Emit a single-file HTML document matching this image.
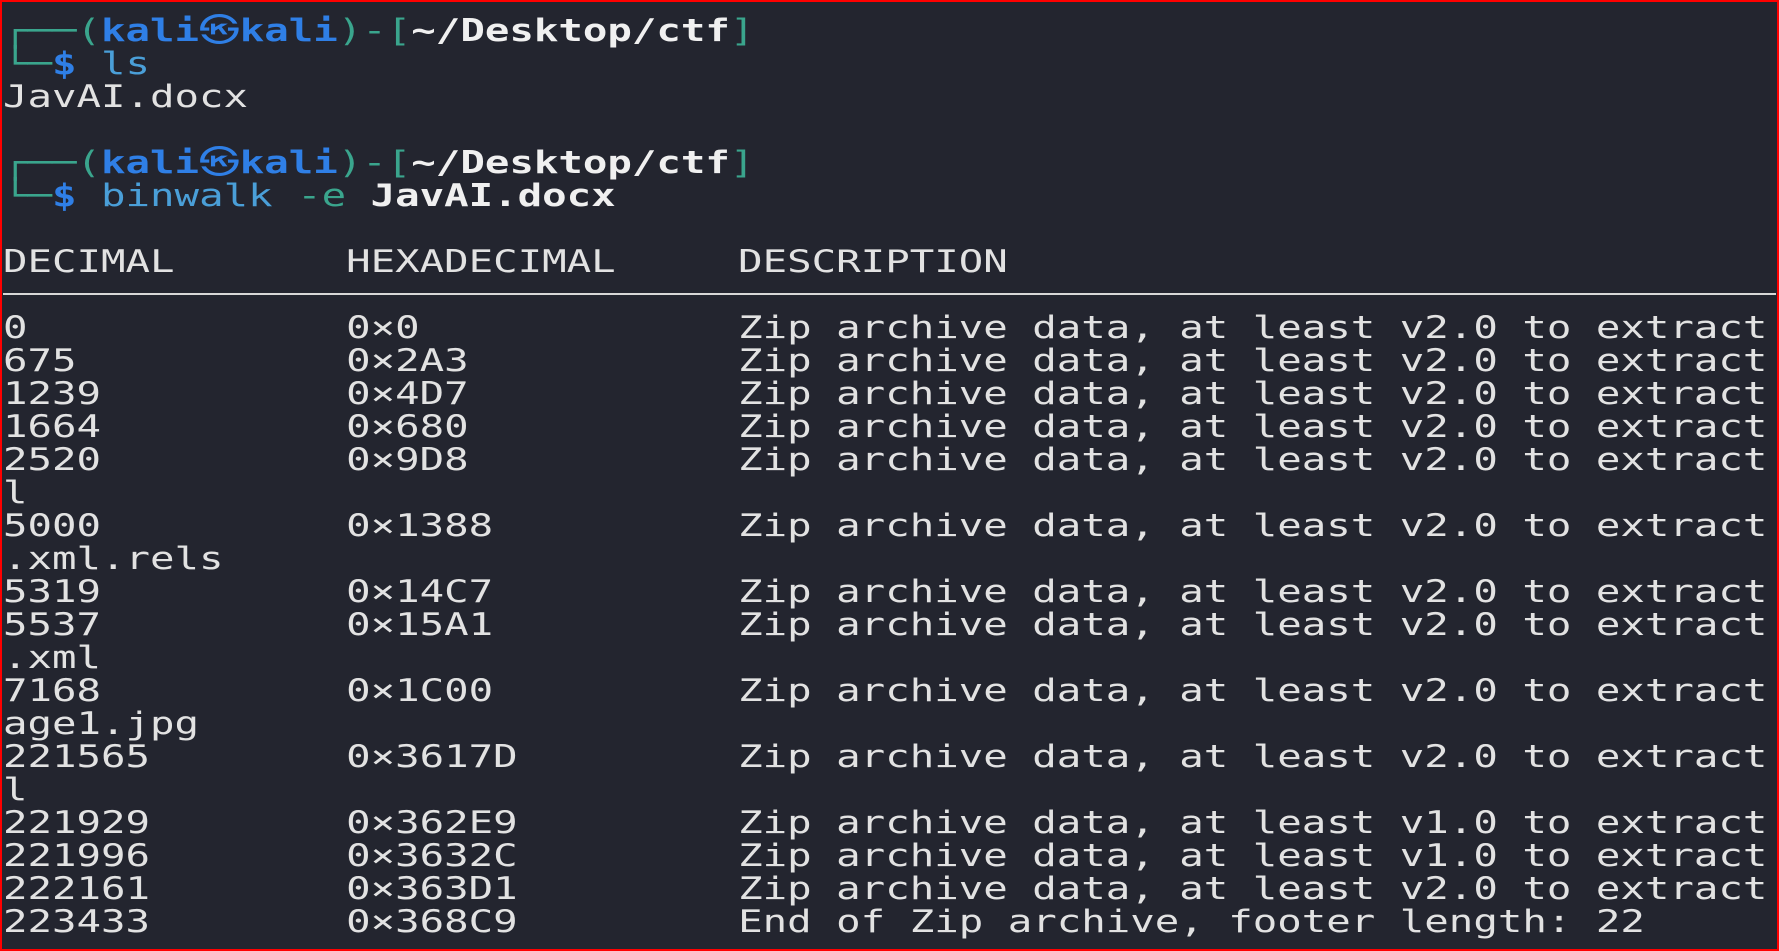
<!DOCTYPE html>
<html><head><meta charset="utf-8"><style>
html,body{margin:0;padding:0}
body{width:1779px;height:951px;overflow:hidden;background:#23252f;position:relative}
.frame{position:absolute;inset:0;border:2px solid #ff0000;box-sizing:border-box;z-index:5}
pre{position:absolute;left:3px;top:15px;margin:0;font-family:"DejaVu Sans Mono","Liberation Mono","Noto Sans CJK JP",monospace;font-size:31px;line-height:33px;letter-spacing:0;color:#e2e2e2;white-space:pre;width:1500px;transform:scaleX(1.313);transform-origin:0 0}
.t{color:#3aa58d}.b{color:#2f7fe6;font-weight:bold}.w{color:#f0f0f0;font-weight:bold}.c{color:#4a9fd8}
.rule{position:absolute;left:3px;right:3px;top:293px;height:2px;background:#d8d8d8}
</style></head><body>
<div class="frame"></div>
<pre><span class="t">┌──(</span><span class="b">kali㉿kali</span><span class="t">)-[</span><span class="w">~/Desktop/ctf</span><span class="t">]</span>
<span class="t">└─</span><span class="b">$</span> <span class="c">ls</span>
JavAI.docx

<span class="t">┌──(</span><span class="b">kali㉿kali</span><span class="t">)-[</span><span class="w">~/Desktop/ctf</span><span class="t">]</span>
<span class="t">└─</span><span class="b">$</span> <span class="c">binwalk</span> <span class="t">-e</span> <span class="w">JavAI.docx</span>

DECIMAL       HEXADECIMAL     DESCRIPTION

0             0×0             Zip archive data, at least v2.0 to extract
675           0×2A3           Zip archive data, at least v2.0 to extract
1239          0×4D7           Zip archive data, at least v2.0 to extract
1664          0×680           Zip archive data, at least v2.0 to extract
2520          0×9D8           Zip archive data, at least v2.0 to extract
l
5000          0×1388          Zip archive data, at least v2.0 to extract
.xml.rels
5319          0×14C7          Zip archive data, at least v2.0 to extract
5537          0×15A1          Zip archive data, at least v2.0 to extract
.xml
7168          0×1C00          Zip archive data, at least v2.0 to extract
age1.jpg
221565        0×3617D         Zip archive data, at least v2.0 to extract
l
221929        0×362E9         Zip archive data, at least v1.0 to extract
221996        0×3632C         Zip archive data, at least v1.0 to extract
222161        0×363D1         Zip archive data, at least v2.0 to extract
223433        0×368C9         End of Zip archive, footer length: 22</pre>
<div class="rule"></div>
</body></html>
